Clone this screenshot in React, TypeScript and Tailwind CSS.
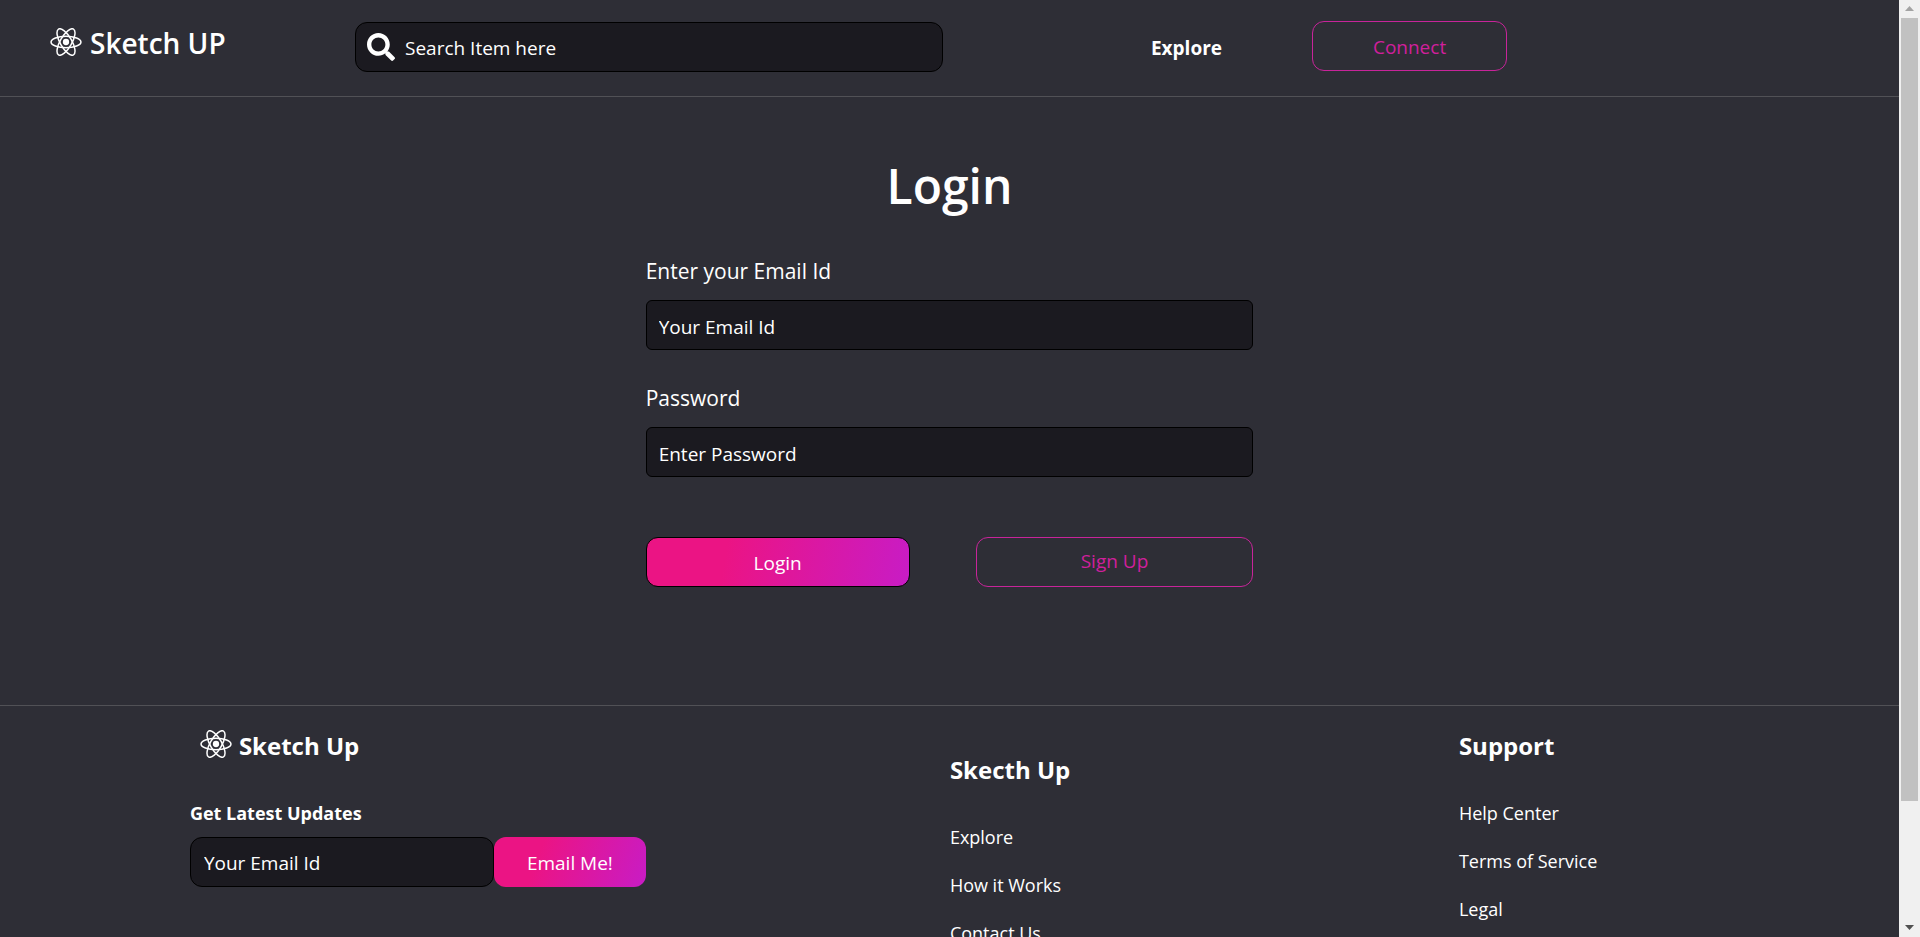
import React from "react";
import { FaSearch } from "react-icons/fa";

function AtomIcon({ className }: { className: string }) {
  return (
    <svg viewBox="-11.5 -10.2 23 20.4" className={className} aria-hidden="true">
      <circle r="2.3" fill="currentColor" />
      <g fill="none" stroke="currentColor" strokeWidth="1.1">
        <ellipse rx="10.9" ry="4.2" />
        <ellipse rx="10.9" ry="4.2" transform="rotate(60)" />
        <ellipse rx="10.9" ry="4.2" transform="rotate(120)" />
      </g>
    </svg>
  );
}

function Header() {
  return (
    <header className="flex h-[97px] items-start border-b border-[#515156] pl-[50px]">
      <a href="#home" className="flex w-[305px] shrink-0 gap-2 pt-6 text-[28px] leading-[38px] font-semibold">
        <AtomIcon className="mt-1 h-7 w-8" />
        Sketch UP
      </a>
      <form role="search" className="mt-[22px] flex h-[50px] w-[31.8%] items-center gap-[10px] rounded-xl border border-black bg-[#1b1a20] px-[11px]">
        <FaSearch className="size-7 shrink-0" aria-hidden="true" />
        <input
          type="search"
          aria-label="Search"
          placeholder="Search Item here"
          className="h-12 w-full bg-transparent pt-[2px] text-[19px] outline-none placeholder:text-white"
        />
      </form>
      <nav className="ml-52 flex items-start">
        <a href="#explore" className="mt-[34px] text-[19px] leading-7 font-bold">Explore</a>
        <button type="button" className="mt-[21px] ml-[90px] h-[50px] w-[195px] rounded-xl border border-[#c8249a] pt-[2px] text-[19px] text-[#d01f9c]">
          Connect
        </button>
      </nav>
    </header>
  );
}

type FieldProps = { id: string; label: string; type: string; placeholder: string };

function Field({ id, label, type, placeholder }: FieldProps) {
  return (
    <div className="flex flex-col gap-[13px]">
      <label htmlFor={id} className="text-[21px] leading-8">{label}</label>
      <input
        id={id}
        type={type}
        placeholder={placeholder}
        className="h-[50px] w-full rounded-md border border-black bg-[#1b1a20] px-3 pt-1 text-[19px] outline-none placeholder:text-white"
      />
    </div>
  );
}

function LoginForm() {
  return (
    <main className="mx-auto w-[32%] pt-[55px] pb-[118px]">
      <h1 className="text-center text-[48px] leading-[68px] font-semibold">Login</h1>
      <form className="mt-[35px] flex flex-col gap-8">
        <Field id="email" label="Enter your Email Id" type="email" placeholder="Your Email Id" />
        <Field id="password" label="Password" type="password" placeholder="Enter Password" />
        <div className="mt-7 flex gap-[66px] text-[19px]">
          <button type="submit" className="h-[50px] w-[264px] rounded-xl border border-black bg-[linear-gradient(100deg,#eb1484_30%,#c81cc5_100%)] pt-[2px]">
            Login
          </button>
          <button type="button" className="h-[50px] flex-1 rounded-xl border border-[#c8249a] pb-[2px] text-[#d01f9c]">
            Sign Up
          </button>
        </div>
      </form>
    </main>
  );
}

function LinkColumn({ title, links }: { title: string; links: string[] }) {
  return (
    <>
      <h2 className="text-2xl leading-8 font-bold">{title}</h2>
      <ul className="mt-[27px] text-[18px] leading-[48px]">
        {links.map((link) => (
          <li key={link}>
            <a href="#footer">{link}</a>
          </li>
        ))}
      </ul>
    </>
  );
}

function Footer() {
  return (
    <footer id="footer" className="flex items-start border-t border-[#515156] pt-6 pb-[150px] pl-[10%]">
      <section className="w-[760px] shrink-0">
        <h2 className="flex gap-[7px] pl-[10px] text-2xl leading-8 font-bold">
          <AtomIcon className="h-7 w-8" />
          Sketch Up
        </h2>
        <form className="mt-[35px]">
          <label htmlFor="updates" className="block text-[18px] leading-8 font-bold">Get Latest Updates</label>
          <div className="mt-2 flex text-[19px]">
            <input
              id="updates"
              type="email"
              placeholder="Your Email Id"
              className="h-[50px] w-[304px] rounded-xl border border-black bg-[#1b1a20] px-[13px] pt-[2px] outline-none placeholder:text-white"
            />
            <button type="submit" className="h-[50px] w-[152px] rounded-xl bg-[linear-gradient(110deg,#eb1484_30%,#c81cc5_100%)] pt-[2px]">
              Email Me!
            </button>
          </div>
        </form>
      </section>
      <section className="w-[509px] shrink-0 pt-6">
        <LinkColumn title="Skecth Up" links={["Explore", "How it Works", "Contact Us"]} />
      </section>
      <section>
        <LinkColumn title="Support" links={["Help Center", "Terms of Service", "Legal"]} />
      </section>
    </footer>
  );
}

function ScrollTrack() {
  return (
    <div aria-hidden="true" className="flex w-[21px] shrink-0 flex-col items-center bg-[#f0f0f0]">
      <svg viewBox="0 0 17 18" className="h-[18px] w-[17px] shrink-0">
        <path d="M4 11 8.500 6 13 11z" fill="#a3a3a3" />
      </svg>
      <div className="w-[17px] flex-[783] bg-[#c1c1c1]" />
      <div className="flex-[118]" />
      <svg viewBox="0 0 17 18" className="h-[18px] w-[17px] shrink-0">
        <path d="M4 6 8.500 11 13 6z" fill="#505050" />
      </svg>
    </div>
  );
}

export default function App() {
  return (
    <div className="flex h-screen bg-[#2e2e36] font-['Open_Sans','Noto_Sans',sans-serif] text-white">
      <div className="min-w-0 flex-1 overflow-y-auto [scrollbar-width:none]">
        <Header />
        <LoginForm />
        <Footer />
      </div>
      <ScrollTrack />
    </div>
  );
}
